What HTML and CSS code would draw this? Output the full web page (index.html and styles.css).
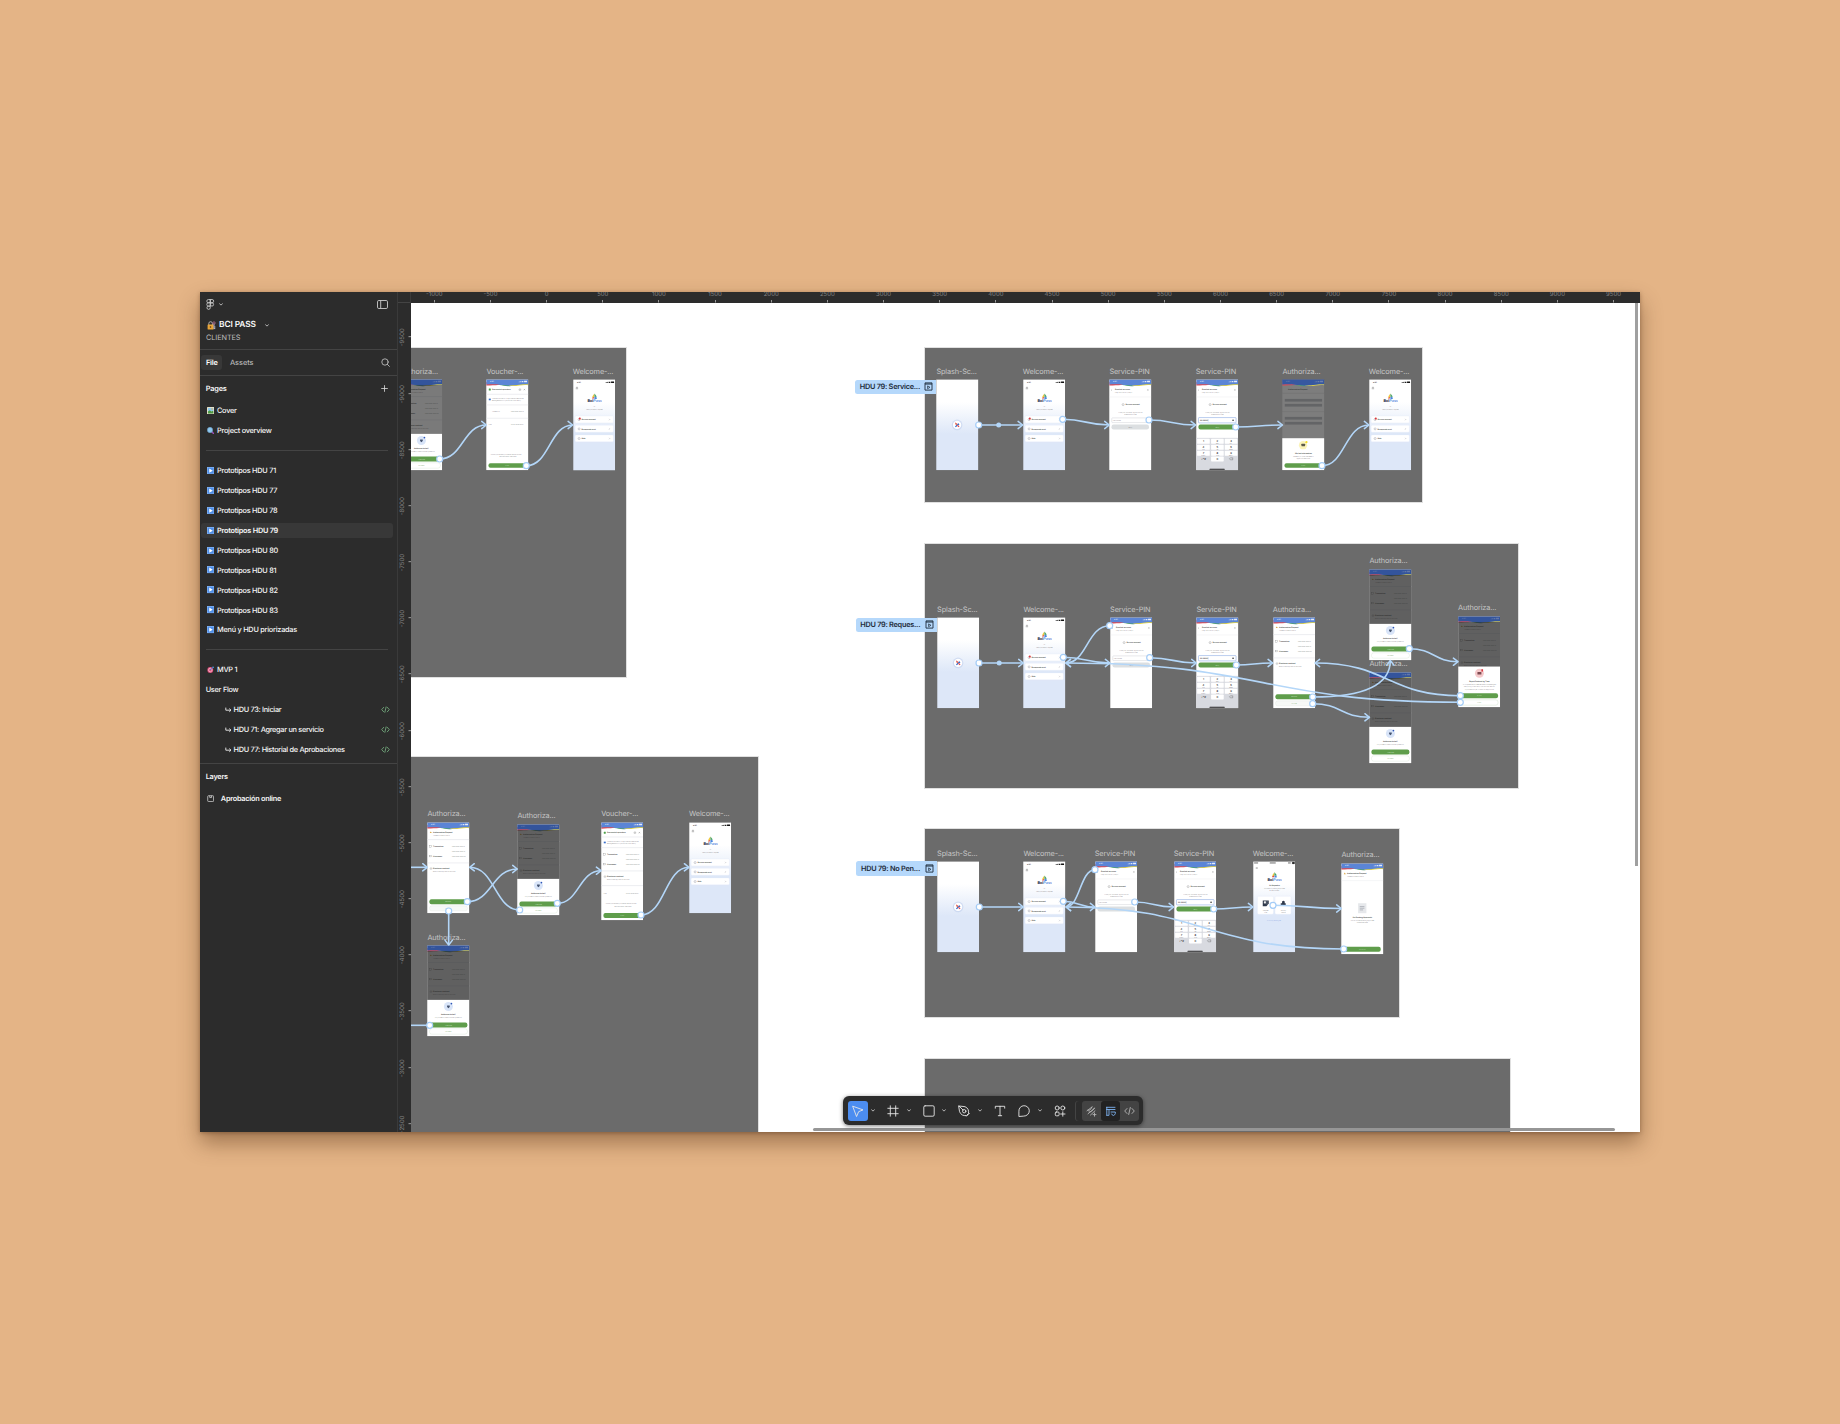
FILE: index.html
```html
<!DOCTYPE html>
<html lang="es">
<head>
<meta charset="utf-8">
<title>BCI PASS</title>
<link rel="stylesheet" href="styles.css">
</head>
<body>
<svg class="defs" width="0" height="0" aria-hidden="true">
  <defs>
    <linearGradient id="sky" x1="0" y1="0" x2="0" y2="1"><stop offset=".25" stop-color="#fff"/><stop offset=".6" stop-color="#dde7f8"/></linearGradient>
    <marker id="arrow" viewBox="0 0 8 10" refX="6.6" refY="5" markerWidth="8" markerHeight="10" markerUnits="userSpaceOnUse" orient="auto"><path d="M2 1.4 6.6 5 2 8.6" fill="none" stroke="#b3d6f8" stroke-width="1.5" stroke-linecap="round" stroke-linejoin="round"/></marker>
  </defs>
  <symbol id="status" viewBox="0 0 127 12"><text x="12" y="9" font-size="5.5" font-weight="600">9:41</text><path d="M98 9v-2h2v2zM101 9v-3h2v3zM104 9v-4h2v4zM108 5h4v4h-4zM114 4.500h9v4.500h-9z"/></symbol>
  <symbol id="head" viewBox="0 0 127 24">
    <path d="M0 8H60C45 21 30 16 0 19Z" fill="#e0474c"/><path d="M40 10H75V20C60 22 50 18 40 17Z" fill="#4d9f6a"/><path d="M70 8H127V18C108 15 98 22 70 20Z" fill="#e6d645"/>
    <path d="M0 0H127V15C104 13 92 18.500 66 18.500C38 18.500 32 13 0 16Z" fill="#5b85d6"/><use href="#status" width="127" height="12" fill="#e6edfa"/>
  </symbol>
  <symbol id="logo" viewBox="0 0 44 32">
    <path d="M22 1 16 9v6l6-3z" fill="#f0c93c"/><path d="M22 1l6 7v4l-6-2z" fill="#45a56a"/><path d="M15 14l6-3v5h-6z" fill="#e0474c"/><path d="M22 10l7 3v4h-7z" fill="#4c86e0"/>
    <text x="1" y="27" font-size="11.5" font-weight="800" fill="#232a3a">Bci<tspan font-weight="600" fill="#5a8fe0">Pass</tspan></text>
  </symbol>
  <symbol id="home" viewBox="0 0 127 274">
    <rect width="127" height="274" fill="url(#sky)"/><use href="#status" y="2" width="127" height="12" fill="#111"/><path d="M8 26h7M8 28.500h7M9 24h5" stroke="#555"/>
    <use href="#logo" x="42" y="42" width="44" height="32"/><text x="64" y="83" class="tm">Hi</text><text x="64" y="91" class="tm">Here you have to request</text>
    <g fill="#fff" stroke="#e3ebf8"><rect x="6" y="110" width="115" height="21" rx="3"/><rect x="6" y="138" width="115" height="21" rx="3"/><rect x="6" y="167" width="115" height="21" rx="3"/></g>
    <g fill="none" stroke="#667" stroke-width=".9"><circle cx="18" cy="121" r="3"/><circle cx="18" cy="149" r="3"/><circle cx="18" cy="178" r="3"/><path d="M108 119l2 2-2 2M108 147l2 2-2 2M108 176l2 2-2 2"/></g>
    <g class="tb"><text x="25" y="123">Service account</text><text x="25" y="151">Recuperate acct.</text><text x="25" y="180">Web</text></g>
  </symbol>
  <symbol id="home-alert" viewBox="0 0 127 274"><use href="#home" width="127" height="274"/><circle cx="20" cy="118" r="3.200" fill="#d93a42"/></symbol>
  <symbol id="splash" viewBox="0 0 127 274">
    <rect width="127" height="274" fill="url(#sky)"/><circle cx="63" cy="137" r="16" fill="#c0cfec" opacity=".6"/><circle cx="63" cy="137" r="12.500" fill="#fff"/><path d="M58 131l6 4-4 2z" fill="#f0b93c" stroke="#e0474c" stroke-width="2"/><path d="M69 134l-5 3" stroke="#2d66c8" stroke-width="4"/><path d="M58 143l5-5" stroke="#2d66c8" stroke-width="3.500"/><path d="M64 138l5 5" stroke="#e0474c" stroke-width="3.500"/>
  </symbol>
  <symbol id="pin-top" viewBox="0 0 127 274">
    <rect width="127" height="274" fill="#fff"/><use href="#head" width="127" height="24"/>
    <path d="M8 31l-2 1.500 2 1.500M115 30l3 4M118 30l-3 4" stroke="#555" fill="none" stroke-width=".8"/><text x="18" y="33" class="tb">Enrolled services</text><text x="18" y="42" class="ts">Step 1 account ID / Step 2</text><path d="M0 53h127" stroke="#e4e6ea"/>
    <circle cx="42" cy="76" r="3" fill="none" stroke="#777"/><text x="49" y="78" class="tb">Service account</text>
    <text x="64" y="100" class="tm">Enter your 4 number-digit Bci Office</text><text x="64" y="107" class="tm">enable this for use</text>
  </symbol>
  <symbol id="pin" viewBox="0 0 127 274"><use href="#pin-top" width="127" height="274"/><rect x="8" y="116" width="112" height="14" rx="2" fill="#fff" stroke="#b9bdc5"/><text x="12" y="125" class="ts">Service PIN</text><rect x="7" y="136" width="113" height="15" rx="7" fill="#dcdfe1"/><text x="64" y="145" class="tm">Verify</text></symbol>
  <symbol id="pin-keys" viewBox="0 0 127 274">
    <use href="#pin-top" width="127" height="274"/><rect x="7" y="115" width="113" height="16" rx="2" fill="#fff" stroke="#6f95dd" stroke-width="1.400"/><text x="12" y="125" class="tb">00 0000|</text><circle cx="111" cy="123" r="2.500" fill="#333"/><rect x="7" y="136" width="113" height="15" rx="6" fill="#5f9d4b"/><text x="64" y="145.500" class="tm" fill="#dbe9d6">Verify</text>
    <rect y="176" width="127" height="98" fill="#d8dae0"/>
    <g fill="#fff"><rect x="3" y="179" width="38" height="15" rx="2"/><rect x="45" y="179" width="38" height="15" rx="2"/><rect x="86" y="179" width="38" height="15" rx="2"/><rect x="3" y="197" width="38" height="15" rx="2"/><rect x="45" y="197" width="38" height="15" rx="2"/><rect x="86" y="197" width="38" height="15" rx="2"/><rect x="3" y="215" width="38" height="15" rx="2"/><rect x="45" y="215" width="38" height="15" rx="2"/><rect x="86" y="215" width="38" height="15" rx="2"/><rect x="45" y="232" width="38" height="15" rx="2"/></g>
    <g class="key"><text x="22" y="189">1</text><text x="64" y="187">2</text><text x="105" y="187">3</text><text x="22" y="205">4</text><text x="64" y="205">5</text><text x="105" y="205">6</text><text x="22" y="223">7</text><text x="64" y="223">8</text><text x="105" y="223">9</text><text x="64" y="242">0</text><text x="22" y="242">+*#</text></g>
    <path d="M100 239l3-3h7v6h-7z" fill="none" stroke="#444"/>
    <g class="tm"><text x="64" y="193">ABC</text><text x="105" y="193">DEF</text><text x="22" y="211">GHI</text><text x="64" y="211">JKL</text><text x="105" y="211">MNO</text><text x="22" y="229">PQRS</text><text x="64" y="229">TUV</text><text x="105" y="229">WXYZ</text></g>
    <rect x="40" y="269" width="46" height="3" rx="1.500" fill="#222"/>
  </symbol>
  <symbol id="auth-body" viewBox="0 0 127 274">
    <rect width="127" height="274" fill="#fff"/><use href="#head" width="127" height="24"/>
    <path d="M8 32l3-4 3 4z" fill="#d9a036"/><text x="18" y="32" class="tb">Authorization Request</text><text x="18" y="42" class="ts">Transaction authorization</text><path d="M0 52h127M0 122h127" stroke="#e4e6ea" stroke-width="2"/>
    <g fill="none" stroke="#777" stroke-width=".8"><rect x="8" y="70" width="5" height="5"/><rect x="8" y="99" width="5" height="5"/><path d="M9 137h5v4h-5z"/></g>
    <g class="tb"><text x="18" y="74">Transaction</text><text x="18" y="104">Username</text><text x="18" y="141">Electronic contract</text></g>
    <g class="ts"><text x="75" y="74">0000 0000 0001 01</text><text x="75" y="89">0000 0000 0002 12</text><text x="75" y="104">0000 0000 0003 00</text><text x="18" y="149">Authorize an app before 24 hours</text></g>
  </symbol>
  <symbol id="auth" viewBox="0 0 127 274"><use href="#auth-body" width="127" height="274"/><rect x="7" y="231" width="114" height="15" rx="6" fill="#5f9d4b"/><text x="64" y="240.500" class="tm" fill="#dbe9d6">APPROVE</text><rect x="7" y="251" width="114" height="15" rx="7" fill="#f7f9f7" stroke="#dfe5df"/><text x="64" y="260.500" class="tm" fill="#5f9d4b">DECLINE</text></symbol>
  <symbol id="dim" viewBox="0 0 127 274"><use href="#auth-body" width="127" height="274"/><rect y="17" width="127" height="257" fill="#222" class="veil"/><path d="M0 0H127V15C104 13 92 18.500 66 18.500C38 18.500 32 13 0 16Z" fill="#1f3a7c" opacity=".65"/></symbol>
  <symbol id="sheet" viewBox="0 0 127 274"><use href="#dim" width="127" height="274"/><rect y="164" width="127" height="110" fill="#fff"/><circle cx="64" cy="184" r="13.500" fill="#d8e4f8"/><path d="M60 181h8v3q-1 4-4 5-3-1-4-5z" fill="#44536f"/><circle cx="73" cy="175" r="2.600" fill="#2d55b8"/>
    <text x="64" y="209" class="tm tb">Authorize ticket?</text><text x="64" y="219" class="tm">Do you want to authorize this operation?</text>
    <rect x="7" y="232" width="114" height="15" rx="6" fill="#5f9d4b"/><text x="64" y="241.500" class="tm" fill="#dbe9d6">CONFIRM</text><rect x="7" y="251" width="114" height="16" rx="7" fill="#fff" stroke="#cfe0ca"/><text x="64" y="261" class="tm" fill="#5f9d4b">GO BACK</text></symbol>
  <symbol id="sheet-red" viewBox="0 0 127 274"><use href="#dim" width="127" height="274"/><rect y="151" width="127" height="123" fill="#fff"/><circle cx="64" cy="171" r="13.500" fill="#f5c9cb"/><rect x="58" y="167" width="12" height="8" rx="1" fill="#7c4a50"/><rect x="70" y="159" width="5" height="7" fill="#d93a42"/>
    <text x="64" y="197" class="tm tb">Reject Protocol by Time</text><g class="tm"><text x="64" y="206">To complete the process we need to request again</text><text x="64" y="213">that you log in and verify your account with Bci</text><text x="64" y="220">If you have not yet, contact our support line</text></g>
    <rect x="7" y="231" width="113" height="15" rx="6" fill="#5f9d4b"/><text x="64" y="240" class="tm" fill="#dbe9d6">RETRY</text><rect x="7" y="251" width="113" height="16" rx="7" fill="#fff" stroke="#bfd8b8"/><text x="64" y="261" class="tm" fill="#5f9d4b">CLOSE</text></symbol>
  <symbol id="sheet-yellow" viewBox="0 0 127 274"><rect width="127" height="274" fill="#7d7d7d"/><use href="#head" width="127" height="24"/><path d="M0 0H127V15C104 13 92 18.500 66 18.500C38 18.500 32 13 0 16Z" fill="#1f3a7c" opacity=".6"/><path d="M0 42h127M0 97h127" stroke="#6b6b6b"/><text x="18" y="33" class="tb">Authorization Request</text><g fill="#636466"><rect x="8" y="59" width="112" height="8"/><rect x="8" y="74" width="112" height="8"/><rect x="8" y="113" width="112" height="8"/><rect x="8" y="128" width="112" height="8"/></g><rect y="177" width="127" height="97" fill="#fff"/><circle cx="63" cy="198" r="12.500" fill="#fbf3b8"/><rect x="58" y="194" width="11" height="7" rx="1" fill="#5e5a4a"/><circle cx="73" cy="189" r="3.500" fill="#f4dc2a"/>
    <text x="64" y="223" class="tm tb">We lost information</text><text x="64" y="232" class="tm">Please try to open this session</text><text x="64" y="239" class="tm">again in a few hours</text><rect x="7" y="252" width="113" height="14" rx="6" fill="#5f9d4b"/><text x="64" y="260.500" class="tm" fill="#dbe9d6">CLOSE</text></symbol>
  <symbol id="voucher" viewBox="0 0 127 274"><rect width="127" height="274" fill="#fff"/><use href="#head" width="127" height="24"/><rect x="8" y="28" width="6" height="6" rx="1" fill="#4da04a"/><text x="18" y="33" class="tb">Successful operation</text><path d="M99 29h5v4h-5zM113 29l4 4M117 29l-4 4" fill="none" stroke="#555" stroke-width=".8"/><path d="M0 45h127M0 77h127M0 117h127" stroke="#e4e6ea" stroke-width="2"/><rect x="8" y="58" width="6" height="5" fill="#3a70cc"/>
    <g class="ts"><text x="18" y="59">This is a notification of approved and sent email</text><text x="18" y="66">We registered it on your Bci account history</text><text x="18" y="98">Transaction</text><text x="75" y="98">0000 0000 0001 01</text><text x="7" y="137">Total</text><text x="75" y="137">00:00 00/00/2023</text><text x="14" y="226">Should you have any problems call the number</text><text x="40" y="233">600 000 0000 customers</text></g>
    <rect x="7" y="252" width="113" height="14" rx="6" fill="#5f9d4b"/><text x="64" y="260.500" class="tm" fill="#dbe9d6">CLOSE</text></symbol>
  <symbol id="voucher-long" viewBox="0 0 127 295"><rect width="127" height="295" fill="#fff"/><use href="#head" width="127" height="24"/><rect x="8" y="28" width="6" height="6" rx="1" fill="#4da04a"/><text x="18" y="33" class="tb">Successful operation</text><path d="M99 29h5v4h-5zM113 29l4 4M117 29l-4 4" fill="none" stroke="#555" stroke-width=".8"/><path d="M0 44h127M0 76h127M0 146h127M0 190h127" stroke="#e4e6ea" stroke-width="2"/><rect x="8" y="58" width="6" height="5" fill="#3a70cc"/>
    <g fill="none" stroke="#777" stroke-width=".8"><rect x="8" y="94" width="5" height="5"/><rect x="8" y="123" width="5" height="5"/><path d="M9 161h5v4h-5z"/></g>
    <g class="tb"><text x="18" y="98">Transaction</text><text x="18" y="128">Username</text><text x="18" y="165">Electronic contract</text></g>
    <g class="ts"><text x="18" y="59">This is a notification of approved and sent email</text><text x="18" y="66">We registered it on your Bci account history</text><text x="75" y="98">0000 0000 0001 01</text><text x="75" y="113">0000 0000 0002 12</text><text x="75" y="128">0000 0000 0003 00</text><text x="18" y="173">Authorize an app before 24 hours</text><text x="7" y="214">Total</text><text x="75" y="214">00:00 00/00/2023</text><text x="14" y="246">Should you have any problems call the number</text><text x="40" y="253">600 000 0000 customers</text></g>
    <rect x="7" y="272" width="113" height="15" rx="6" fill="#5f9d4b"/><text x="64" y="281" class="tm" fill="#dbe9d6">CLOSE</text></symbol>
  <symbol id="home-cards" viewBox="0 0 127 274"><rect width="127" height="274" fill="url(#sky)"/><path d="M3 5h12M118 3h6v4h-6zM105 5h8M50 5h18" stroke="#222" stroke-width="2"/><path d="M8 19h6M8 21.500h6" stroke="#555"/><use href="#logo" x="42" y="32" width="44" height="32"/><text x="64" y="74" class="tm tb">Hi Alejandra</text><text x="64" y="82" class="tm">You have no pending approvals</text><text x="64" y="88" class="tm">at this moment</text><rect x="13" y="105" width="48" height="54" rx="4" fill="#fff" stroke="#e3ebf8"/><rect x="66" y="105" width="48" height="54" rx="4" fill="#fff" stroke="#e3ebf8"/><path d="M29 118h18v9l-7 8H29z" fill="#303a4c"/><path d="M33 121h5v5h-5zM40 122h4M40 128h4" fill="#fff" stroke="#fff"/><path d="M83 126h15v7H83zM87 126v-5q4-5 8 0v5" fill="#303a4c"/><g class="tm"><text x="38" y="148">Request</text><text x="38" y="154">now</text><text x="91" y="148">Security</text><text x="91" y="154">Device</text></g><text x="63" y="180" class="tm" fill="#6f95dd">Go to my pending list</text></symbol>
  <symbol id="empty" viewBox="0 0 127 274"><rect width="127" height="274" fill="#fff"/><use href="#head" width="127" height="24"/><path d="M8 33l3-5 3 5z" fill="#d9a036"/><text x="18" y="32" class="tb">Authorization Request</text><text x="18" y="42" class="ts">Transaction authorization</text><path d="M0 52h127" stroke="#e4e6ea"/><rect x="51" y="120" width="25" height="30" fill="#e6e8eb"/><path d="M56 130h14M56 135h14M56 140h10" stroke="#a9adb5" stroke-width="2.500"/><text x="64" y="164" class="tm tb">No Pending Approvals</text><text x="64" y="173" class="tm">You do not have pending approvals</text><text x="64" y="180" class="tm">Check them later</text><rect x="7" y="251" width="112" height="15" rx="6" fill="#5f9d4b"/><text x="64" y="260.500" class="tm" fill="#dbe9d6">REFRESH</text></symbol>
  <symbol id="play" viewBox="0 0 8 8"><rect width="8" height="8" rx=".6" fill="#4f8fe8"/><rect x=".4" y=".4" width="7.200" height="7.200" fill="none" stroke="#8ab8f4" stroke-width=".7"/><path d="M2.500 1.700 6.300 4 2.500 6.300z" fill="#fff"/></symbol>
  <symbol id="code" viewBox="0 0 10 8"><path d="M3 1.500.8 4 3 6.500M7 1.500 9.200 4 7 6.500M5.700 1 4.300 7" fill="none" stroke="currentColor" stroke-width=".9" stroke-linecap="round"/></symbol>
  <symbol id="chev" viewBox="0 0 4 3"><path d="M.6.8 2 2.100 3.400.8" fill="none" stroke="currentColor" stroke-width=".9" stroke-linecap="round"/></symbol>
  <symbol id="flow" viewBox="0 0 9 9"><path d="M1 .9h7v7.200H1z" fill="none" stroke="#1d2b3a" stroke-width=".9"/><path d="M1 2h7" stroke="#1d2b3a" stroke-width="1"/><path d="M3.600 3.900 6 5.300 3.600 6.700z" fill="none" stroke="#1d2b3a" stroke-width=".7"/></symbol>
</svg>

<main class="window">
  <aside class="sidebar">
    <header class="brand">
      <div class="bar">
        <svg class="figma" viewBox="0 0 8 11" fill="none" stroke="#ddd" stroke-width=".75"><path d="M4 .5H2.200a1.650 1.650 0 0 0 0 3.300H4zM4 .5h1.800a1.650 1.650 0 0 1 0 3.300H4zM4 3.800H2.200a1.650 1.650 0 0 0 0 3.300H4zM4 7.100H2.200A1.650 1.650 0 1 0 4 8.800z"/><circle cx="5.700" cy="5.450" r="1.650"/></svg>
        <svg class="chev"><use href="#chev"/></svg>
        <svg class="panel" viewBox="0 0 11 9" fill="none" stroke="#ccc" stroke-width=".9"><rect x=".5" y=".5" width="10" height="8" rx="1.300"/><path d="M3.700.5v8"/></svg>
      </div>
      <div class="file">
        <svg class="lock" viewBox="0 0 9 9"><path d="M1.800 4V2.500a1.800 1.800 0 0 1 3.600 0V4" fill="none" stroke="#aaa" stroke-width="1"/><rect x=".6" y="3.600" width="6" height="5" rx=".5" fill="#e9a63a"/><circle cx="3.500" cy="6" r=".8" fill="#4a3418"/><path d="M7 2.500v5.500M7 6h1.500M7 7.600h1.300" stroke="#c7cbe8" stroke-width=".8"/><circle cx="7" cy="2" r="1.200" fill="none" stroke="#b36b8e" stroke-width=".8"/></svg>
        <h1>BCI PASS</h1>
        <svg class="chev"><use href="#chev"/></svg>
      </div>
      <p>CLIENTES</p>
    </header>
    <nav class="tabs"><span class="tab on">File</span><span class="tab">Assets</span>
      <svg class="search" viewBox="0 0 9 9" fill="none" stroke="#ccc" stroke-width=".8" stroke-linecap="round"><circle cx="4" cy="4" r="3.200"/><path d="M6.400 6.400 8.400 8.400"/></svg></nav>
    <section class="pages">
      <h2>Pages<svg class="plus" viewBox="0 0 7 7" stroke="#ddd" stroke-width=".8"><path d="M3.500.2v6.600M.2 3.500h6.600"/></svg></h2>
      <ul>
        <li><svg class="ico" viewBox="0 0 8 8"><rect width="8" height="8" rx=".6" fill="#e9e2c8"/><rect x="1" y="1" width="6" height="3.500" fill="#8ec9ee"/><path d="M1 7V5l2-1.500L5 5l1-.8L7 5v2z" fill="#4d9a46"/><circle cx="5.500" cy="2.300" r=".8" fill="#f0a03a"/></svg>Cover</li>
        <li><svg class="ico" viewBox="0 0 8 8"><path d="M5.300 5.300l2 2" stroke="#9a4fb8" stroke-width="1.500" stroke-linecap="round"/><circle cx="3.300" cy="3.300" r="2.900" fill="#8fc8ee" stroke="#6b9cc8" stroke-width=".6"/></svg>Project overview</li>
        <li class="rule"></li>
        <li><svg class="ico"><use href="#play"/></svg>Prototipos HDU 71</li>
        <li><svg class="ico"><use href="#play"/></svg>Prototipos HDU 77</li>
        <li><svg class="ico"><use href="#play"/></svg>Prototipos HDU 78</li>
        <li class="on"><svg class="ico"><use href="#play"/></svg>Prototipos HDU 79</li>
        <li><svg class="ico"><use href="#play"/></svg>Prototipos HDU 80</li>
        <li><svg class="ico"><use href="#play"/></svg>Prototipos HDU 81</li>
        <li><svg class="ico"><use href="#play"/></svg>Prototipos HDU 82</li>
        <li><svg class="ico"><use href="#play"/></svg>Prototipos HDU 83</li>
        <li><svg class="ico"><use href="#play"/></svg>Menú y HDU priorizadas</li>
        <li class="rule"></li>
        <li><svg class="ico" viewBox="0 0 8 8"><circle cx="3.600" cy="4.400" r="3.200" fill="#e04f7c"/><circle cx="3.600" cy="4.400" r="1.900" fill="none" stroke="#f4d7e0" stroke-width=".7"/><path d="M3.600 4.400 6.500 1.500" stroke="#3f7fd8" stroke-width="1"/><path d="M5.600 1.200 7 .2v1.200h1L6.800 2.600z" fill="#4fa6ee"/></svg>MVP 1</li>
        <li>User Flow</li>
        <li class="sub"><svg class="turn" viewBox="0 0 7 6"><path d="M.8.6v2.600h5M4.300 1.600l1.700 1.600L4.300 4.800" fill="none" stroke="#eee" stroke-width=".9"/></svg>HDU 73: Iniciar<svg class="code"><use href="#code"/></svg></li>
        <li class="sub"><svg class="turn" viewBox="0 0 7 6"><path d="M.8.6v2.600h5M4.300 1.600l1.700 1.600L4.300 4.800" fill="none" stroke="#eee" stroke-width=".9"/></svg>HDU 71: Agregar un servicio<svg class="code"><use href="#code"/></svg></li>
        <li class="sub"><svg class="turn" viewBox="0 0 7 6"><path d="M.8.6v2.600h5M4.300 1.600l1.700 1.600L4.300 4.800" fill="none" stroke="#eee" stroke-width=".9"/></svg>HDU 77: Historial de Aprobaciones<svg class="code"><use href="#code"/></svg></li>
      </ul>
    </section>
    <section class="layers">
      <h2>Layers</h2>
      <p><svg class="ico" viewBox="0 0 8 8" fill="none" stroke="#ddd" stroke-width=".8"><rect x=".8" y=".8" width="6.400" height="6.400" rx=".8"/><path d="M3 .8v2h2v-2"/></svg>Aprobación online</p>
    </section>
  </aside>

  <div class="corner"></div>
  <div class="ruler-x"><span>-1000</span><span>-500</span><span>0</span><span>500</span><span>1000</span><span>1500</span><span>2000</span><span>2500</span><span>3000</span><span>3500</span><span>4000</span><span>4500</span><span>5000</span><span>5500</span><span>6000</span><span>6500</span><span>7000</span><span>7500</span><span>8000</span><span>8500</span><span>9000</span><span>9500</span></div>
  <div class="ruler-y"><span>-9500</span><span>-9000</span><span>-8500</span><span>-8000</span><span>-7500</span><span>-7000</span><span>-6500</span><span>-6000</span><span>-5500</span><span>-5000</span><span>-4500</span><span>-4000</span><span>-3500</span><span>-3000</span><span>-2500</span></div>

  <div class="canvas">
    <div class="board">
      <div class="section" style="left:400px;top:348px;width:226.300px;height:328.800px"></div>
      <div class="section" style="left:400px;top:757px;width:357.500px;height:400px"></div>
      <div class="section" style="left:925.300px;top:348px;width:496.700px;height:154px"></div>
      <div class="section" style="left:925.300px;top:544px;width:593px;height:243.800px"></div>
      <div class="section" style="left:925.300px;top:829.500px;width:474px;height:188px"></div>
      <div class="section" style="left:925.300px;top:1059.500px;width:584.300px;height:100px"></div>

      <figure class="pale" style="left:399.700px;top:379.300px"><figcaption>Authoriza...</figcaption><svg><use href="#sheet"/></svg></figure>
      <figure style="left:486.300px;top:379.300px"><figcaption>Voucher-...</figcaption><svg><use href="#voucher"/></svg></figure>
      <figure style="left:572.700px;top:379.500px"><figcaption>Welcome-...</figcaption><svg><use href="#home-alert"/></svg></figure>

      <figure style="left:427.300px;top:822px"><figcaption>Authoriza...</figcaption><svg><use href="#auth"/></svg></figure>
      <figure style="left:517.300px;top:823.700px"><figcaption>Authoriza...</figcaption><svg><use href="#sheet"/></svg></figure>
      <figure class="long" style="left:601.200px;top:822px"><figcaption>Voucher-...</figcaption><svg><use href="#voucher-long"/></svg></figure>
      <figure style="left:689px;top:822px"><figcaption>Welcome-...</figcaption><svg><use href="#home"/></svg></figure>
      <figure style="left:427.300px;top:945.300px"><figcaption>Authoriza...</figcaption><svg><use href="#sheet"/></svg></figure>

      <figure style="left:936.300px;top:379.300px"><figcaption>Splash-Sc...</figcaption><svg><use href="#splash"/></svg></figure>
      <figure style="left:1022.700px;top:379.300px"><figcaption>Welcome-...</figcaption><svg><use href="#home-alert"/></svg></figure>
      <figure style="left:1109.300px;top:379.300px"><figcaption>Service-PIN</figcaption><svg><use href="#pin"/></svg></figure>
      <figure style="left:1195.700px;top:379.300px"><figcaption>Service-PIN</figcaption><svg><use href="#pin-keys"/></svg></figure>
      <figure style="left:1282.300px;top:379.300px"><figcaption>Authoriza...</figcaption><svg><use href="#sheet-yellow"/></svg></figure>
      <figure style="left:1368.700px;top:379.300px"><figcaption>Welcome-...</figcaption><svg><use href="#home-alert"/></svg></figure>

      <figure style="left:937px;top:617.300px"><figcaption>Splash-Sc...</figcaption><svg><use href="#splash"/></svg></figure>
      <figure style="left:1023.300px;top:617.300px"><figcaption>Welcome-...</figcaption><svg><use href="#home-alert"/></svg></figure>
      <figure style="left:1110px;top:617.300px"><figcaption>Service-PIN</figcaption><svg><use href="#pin"/></svg></figure>
      <figure style="left:1196.300px;top:617.300px"><figcaption>Service-PIN</figcaption><svg><use href="#pin-keys"/></svg></figure>
      <figure style="left:1272.700px;top:617.300px"><figcaption>Authoriza...</figcaption><svg><use href="#auth"/></svg></figure>
      <figure style="left:1369.300px;top:569px"><figcaption>Authoriza...</figcaption><svg><use href="#sheet"/></svg></figure>
      <figure style="left:1369.300px;top:671.700px"><figcaption>Authoriza...</figcaption><svg><use href="#sheet"/></svg></figure>
      <figure style="left:1458px;top:616px"><figcaption>Authoriza...</figcaption><svg><use href="#sheet-red"/></svg></figure>

      <figure style="left:937px;top:861.300px"><figcaption>Splash-Sc...</figcaption><svg><use href="#splash"/></svg></figure>
      <figure style="left:1023.300px;top:861.300px"><figcaption>Welcome-...</figcaption><svg><use href="#home"/></svg></figure>
      <figure style="left:1094.700px;top:861.300px"><figcaption>Service-PIN</figcaption><svg><use href="#pin"/></svg></figure>
      <figure style="left:1173.700px;top:861.300px"><figcaption>Service-PIN</figcaption><svg><use href="#pin-keys"/></svg></figure>
      <figure style="left:1252.700px;top:861.300px"><figcaption>Welcome-...</figcaption><svg><use href="#home-cards"/></svg></figure>
      <figure style="left:1341.300px;top:863px"><figcaption>Authoriza...</figcaption><svg><use href="#empty"/></svg></figure>

      <svg class="wires" viewBox="0 0 1640 1140">
        <g class="wire">
          <path d="M439.700 459C463 459 463 425 486.300 425"/><path d="M526.300 465.700C549.500 465.700 549.500 425 572.700 425"/>
          <path d="M405 867.300H427.300"/><path d="M467.300 901.700C492 901.700 492 869 517.300 869"/><path d="M519.700 910C495 910 495 867.300 469.700 867.300"/><path d="M557.300 903.300C579 903.300 579 870.700 601 870.700"/><path d="M641 915C665 915 665 867.300 689 867.300"/><path d="M448.700 911V945"/>
          <path d="M978.700 425H1022.700"/><path d="M1062.700 419.300C1086 419.300 1086 425 1109.300 425"/><path d="M1149 420C1172 420 1172 425 1195.700 425"/><path d="M1235.700 427C1259 427 1259 425 1282.500 425"/><path d="M1322 465.700C1345 465.700 1345 425 1369 425"/>
          <path d="M979 663H1023.300"/><path d="M1063.300 657.300C1086 657.300 1086 663 1110 663"/><path d="M1109.700 625.700C1087 625.700 1087 663 1065.700 663"/><path d="M1149.700 657.700C1173 657.700 1173 663 1196.300 663"/><path d="M1460.300 702.300C1263 702.300 1263 663 1066 663"/><path d="M1236.300 665C1254 665 1254 663 1272.700 663"/><path d="M1312.700 697C1352 697 1390.300 690 1390.300 660.500"/><path d="M1312.700 703.700C1341 703.700 1341 717.300 1369.500 717.300"/><path d="M1409.300 648.700C1434 648.700 1434 661.700 1458 661.700"/><path d="M1460.300 695.700C1388 695.700 1388 663 1315 663"/>
          <path d="M979.300 907H1023.300"/><path d="M1063.300 901.300C1079 901.300 1079 907 1095 907"/><path d="M1095 869.700C1080 869.700 1080 907 1066 907"/><path d="M1134.700 902C1154 902 1154 907 1173.700 907"/><path d="M1343.700 949C1205 949 1205 907 1066 907"/><path d="M1213.700 909C1233 909 1233 907 1253 907"/><path d="M1273 905.300C1307 905.300 1307 908.500 1341.300 908.500"/>
        </g>
        <path d="M405 1025.300H429.700" class="plain"/>
        <g class="node"><circle cx="439.700" cy="459" r="3"/><circle cx="526.300" cy="465.700" r="3"/><circle cx="467.300" cy="901.700" r="3"/><circle cx="519.700" cy="910" r="3"/><circle cx="557.300" cy="903.300" r="3"/><circle cx="641" cy="915" r="3"/><circle cx="448.700" cy="911" r="3"/><circle cx="429.700" cy="1025.300" r="3"/><circle cx="978.700" cy="425" r="3"/><circle cx="1062.700" cy="419.300" r="3"/><circle cx="1149" cy="420" r="3"/><circle cx="1235.700" cy="427" r="3"/><circle cx="1322" cy="465.700" r="3"/><circle cx="979" cy="663" r="3"/><circle cx="1063.300" cy="657.300" r="3"/><circle cx="1109.700" cy="625.700" r="3"/><circle cx="1149.700" cy="657.700" r="3"/><circle cx="1460.300" cy="702.300" r="3"/><circle cx="1236.300" cy="665" r="3"/><circle cx="1312.700" cy="697" r="3"/><circle cx="1312.700" cy="703.700" r="3"/><circle cx="1409.300" cy="648.700" r="3"/><circle cx="1460.300" cy="695.700" r="3"/><circle cx="979.300" cy="907" r="3"/><circle cx="1063.300" cy="901.300" r="3"/><circle cx="1095" cy="869.700" r="3"/><circle cx="1134.700" cy="902" r="3"/><circle cx="1343.700" cy="949" r="3"/><circle cx="1213.700" cy="909" r="3"/><circle cx="1273" cy="905.300" r="3"/></g>
        <g fill="#b3d6f8"><circle cx="998.700" cy="425" r="2.500"/><circle cx="999.200" cy="663" r="2.500"/></g>
      </svg>

      <div class="chip" style="left:855px;top:379.700px;width:81.300px">HDU 79: Service...<svg><use href="#flow"/></svg></div>
      <div class="chip" style="left:855.500px;top:617.700px;width:81.500px">HDU 79: Reques...<svg><use href="#flow"/></svg></div>
      <div class="chip" style="left:856.300px;top:861.500px;width:80.700px">HDU 79: No Pen...<svg><use href="#flow"/></svg></div>
    </div>
    <i class="scroll-y"></i><i class="scroll-x"></i>
    <div class="toolbar">
      <span class="tool on"><svg viewBox="0 0 20 20"><path d="M5 5.300 15 8.900 10.600 10.700 8.700 15.200Z"/></svg></span><svg class="chev"><use href="#chev"/></svg>
      <span class="tool"><svg viewBox="0 0 20 20"><path d="M7.300 4.800v10.400M12.700 4.800v10.400M4.800 7.300h10.400M4.800 12.700h10.400"/></svg></span><svg class="chev"><use href="#chev"/></svg>
      <span class="tool"><svg viewBox="0 0 20 20"><rect x="4.800" y="4.800" width="10.400" height="10.400" rx="1.300"/></svg></span><svg class="chev"><use href="#chev"/></svg>
      <span class="tool"><svg viewBox="0 0 20 20"><path d="M5 5 11 5.700Q15.300 7.500 14.500 12.500L12.500 14.500Q7.500 15.300 5.700 11ZM5 5l4 4M12.500 15.200l2.900-2.900"/><circle cx="10.200" cy="10.200" r="1.700"/></svg></span><svg class="chev"><use href="#chev"/></svg>
      <span class="tool"><svg viewBox="0 0 20 20"><path d="M5.300 7.200V5.300h9.400v1.900M10 5.300v9.400M8.300 14.700h3.400"/></svg></span>
      <span class="tool talk"><svg viewBox="0 0 20 20"><path d="M4.900 15.100V10.200a5.200 5.200 0 1 1 5.200 4.900Z"/></svg></span><svg class="chev"><use href="#chev"/></svg>
      <span class="tool"><svg viewBox="0 0 20 20"><circle cx="7.200" cy="7" r="2"/><circle cx="12.800" cy="7" r="2"/><rect x="5.300" y="11" width="3.800" height="3.800" rx="1"/><path d="M12.800 10.800v4.400M10.600 13h4.400"/></svg></span>
      <span class="modes">
        <svg viewBox="0 0 19 20"><path d="M5 9.800 10 6M6 12.800 12.500 7.200M8.500 14 13 9.800M10 6Q8 10.500 6 9.200M12.500 7.200Q9 12 7 11M12.500 12v3.200M11 13.600h3"/></svg>
        <svg class="on" viewBox="0 0 18 20"><path d="M5 6.300h8.500M5 8.500h8.500M5.300 6.300v8M7.500 8.500v5.800H5.300M9.500 11h4.300v1.500q-.3 1.500-1.900 2-1.600-.5-1.900-1.500"/></svg>
        <svg viewBox="0 0 19 20"><path d="M7 7.500 4.700 10 7 12.500M12 7.500 14.300 10 12 12.500M10.300 6.500 8.700 13.500"/></svg>
      </span>
    </div>
  </div>
</main>
</body>
</html>
```

FILE: styles.css
```css
* { box-sizing: border-box; margin: 0; padding: 0; }
body { width: 1840px; height: 1424px; padding: 292.300px 200px; background: #e4b486; font-family: Inter, "Liberation Sans", sans-serif; text-rendering: geometricPrecision; overflow: hidden; }
svg { display: block; flex: none; }
.defs { position: absolute; }

.window { display: grid; grid-template-columns: 198px 13px 1fr; grid-template-rows: 10.700px 1fr; width: 1440px; height: 839.400px; background: #fff; box-shadow: 0 11px 20px rgba(70, 35, 10, .42), 0 1px 4px rgba(70, 35, 10, .35); }

/* sidebar */
.sidebar { grid-row: 1 / 3; background: #2c2c2c; border-right: 1.300px solid #3a3a3a; color: #f8f8f8; font-size: 7.330px; font-weight: 500; letter-spacing: -.25px; white-space: nowrap; }
.chev { width: 4px; height: 3px; color: #c4c4c4; }
.brand { height: 58px; padding: 6.500px 9px 0 6px; border-bottom: 1.200px solid #444; }
.bar { display: flex; align-items: center; height: 12px; }
.figma { width: 8.500px; height: 11px; margin-right: 4px; }
.panel { width: 11px; height: 9px; margin-left: auto; }
.file { display: flex; align-items: center; height: 12px; margin-top: 8.400px; padding-left: 1px; }
.lock { width: 9px; height: 9px; margin-right: 3px; }
.file h1 { width: 45.600px; font-size: 8.400px; font-weight: 600; letter-spacing: -.12px; }
.brand p { margin-top: 2px; line-height: 10px; color: #bdbdbd; font-weight: 400; letter-spacing: -.1px; }
.tabs { display: flex; align-items: center; gap: 3px; height: 25.700px; padding: 0 7px 0 1px; border-bottom: 1.200px solid #444; color: #b8b8b8; letter-spacing: -.05px; }
.tab { height: 15px; padding: 0 5px; line-height: 15.500px; border-radius: 3px; }
.tab.on { width: 21px; background: #383838; color: #fff; font-weight: 600; letter-spacing: -.2px; }
.search { width: 9px; height: 9px; margin-left: auto; }
h2 { display: flex; align-items: center; justify-content: space-between; height: 24.700px; padding: 0 9px 0 5.700px; font-size: 7.330px; font-weight: 600; }
.pages h2 { letter-spacing: -.15px; }
.plus { width: 7px; height: 7px; }
ul { list-style: none; }
li { display: flex; align-items: center; height: 19.950px; margin-right: 4.500px; padding-left: 5.700px; }
.ico { width: 7.300px; height: 7.300px; margin: 0 3px 0 1px; }
li.rule::before { content: ""; width: 182px; border-top: 1px solid #444; }
li.on { height: 15.290px; margin: 2.330px 4.500px 2.330px 1px; padding-left: 4.700px; background: #383838; border-radius: 3px; font-weight: 600; letter-spacing: -.24px; }
.sub { padding-left: 24.500px; letter-spacing: -.3px; }
.turn { width: 7px; height: 6px; margin-right: 2px; }
.code { width: 9px; height: 7.200px; margin: 0 3px 0 auto; color: #79b585; }
.pages { padding-bottom: 3.200px; border-bottom: 1.200px solid #444; }
.layers h2 { height: 25.500px; }
.layers p { display: flex; align-items: center; height: 18px; padding-left: 6px; font-weight: 600; }
.layers .ico { margin-right: 6.500px; }

/* rulers */
.corner { background: #2c2c2c; border-right: 1px solid #3a3a3a; border-bottom: 1px solid #444; }
.ruler-x, .ruler-y { display: flex; overflow: hidden; background: #2c2c2c; color: #858585; font-size: 6px; }
.ruler-x span { display: flex; flex: none; justify-content: center; width: 56.160px; height: 10.700px; line-height: 6.400px; background: linear-gradient(#999, #999) 50% 100% / 1px 2.500px no-repeat; }
.ruler-x span:first-child { margin-left: -4.800px; }
.ruler-y { flex-direction: column; }
.ruler-y span { flex: none; width: 13px; height: 56.160px; padding-right: 5px; writing-mode: vertical-rl; transform: rotate(180deg); text-align: center; line-height: 0; background: linear-gradient(#999, #999) 0 50% / 2.500px 1px no-repeat; }
.ruler-y span:first-child { margin-top: 6.500px; }

/* canvas */
.canvas { position: relative; overflow: hidden; background: #fff; }
.board { position: absolute; left: -411px; top: -303px; width: 1640px; height: 1140px; }
.section { position: absolute; background: #6b6b6b; outline: 1px solid rgba(0, 0, 0, .12); }
figure { --veil: .72; position: absolute; width: 42.300px; transform: translate(.1px, .3px); }
figure.pale { --veil: .6; }
figure svg { width: 42.300px; height: 91.200px; font-family: Inter, sans-serif; }
.long svg { height: 98.300px; }
.veil { opacity: var(--veil); }
figcaption { position: absolute; left: 0; bottom: 100%; line-height: 10px; padding-bottom: 2.600px; font-size: 7.330px; letter-spacing: -.13px; color: #c6c6c6; white-space: nowrap; }
.ts, .tm { font-size: 4.200px; }
.ts { fill: #666; }
.tm { text-anchor: middle; }
.tm:not([fill]) { fill: #666; }
.tb, .tm.tb { font-size: 5.400px; font-weight: 600; fill: #333; }
.key { font-size: 8px; font-weight: 500; fill: #222; text-anchor: middle; }
.wires { position: absolute; left: 0; top: 0; width: 1640px; height: 1140px; }
.wire path, .plain { fill: none; stroke: #b3d6f8; stroke-width: 1.600; }
.wire path { marker-end: url(#arrow); }
.node { fill: #fff; stroke: #a5cdf7; stroke-width: 1.200; }
.chip { position: absolute; display: flex; align-items: center; justify-content: space-between; height: 14.500px; padding: 0 3px 0 4.700px; border-radius: 2.500px 0 0 2.500px; background: #b5d8fb; color: #1d2b3a; font-size: 7.330px; font-weight: 600; letter-spacing: -.26px; white-space: nowrap; }
.chip svg { width: 9px; height: 9px; }
.scroll-y { position: absolute; right: 2px; top: 0; width: 2.600px; height: 563px; background: #a0a0a0; }
.scroll-x { position: absolute; left: 402px; bottom: 1px; width: 802px; height: 2.400px; border-radius: 2px; background: #969696; }

.toolbar { position: absolute; left: 431.700px; top: 793px; display: flex; align-items: center; width: 300px; height: 29.300px; padding-left: 5px; border-radius: 6px; background: #2c2c2c; box-shadow: 0 1px 4px rgba(0, 0, 0, .5); }
.tool { width: 20px; height: 20px; border-radius: 3px; }
.tool svg, .modes svg { height: 20px; fill: none; stroke: #e6e6e6; stroke-width: .9; stroke-linecap: round; stroke-linejoin: round; }
.tool.on { background: #4c8df0; }
.toolbar .chev { margin: 0 7.700px 0 3.800px; }
.tool + .talk { margin-left: 4.800px; }
.modes { display: flex; margin-left: 12px; border-radius: 3px; background: #434343; box-shadow: -6px 0 0 #2c2c2c, -7px 0 0 #444; }
.modes svg { width: 19px; stroke: #b5b5b5; }
.modes svg.on { background: #222; border-radius: 3px; stroke: #7fb4f2; }
```
